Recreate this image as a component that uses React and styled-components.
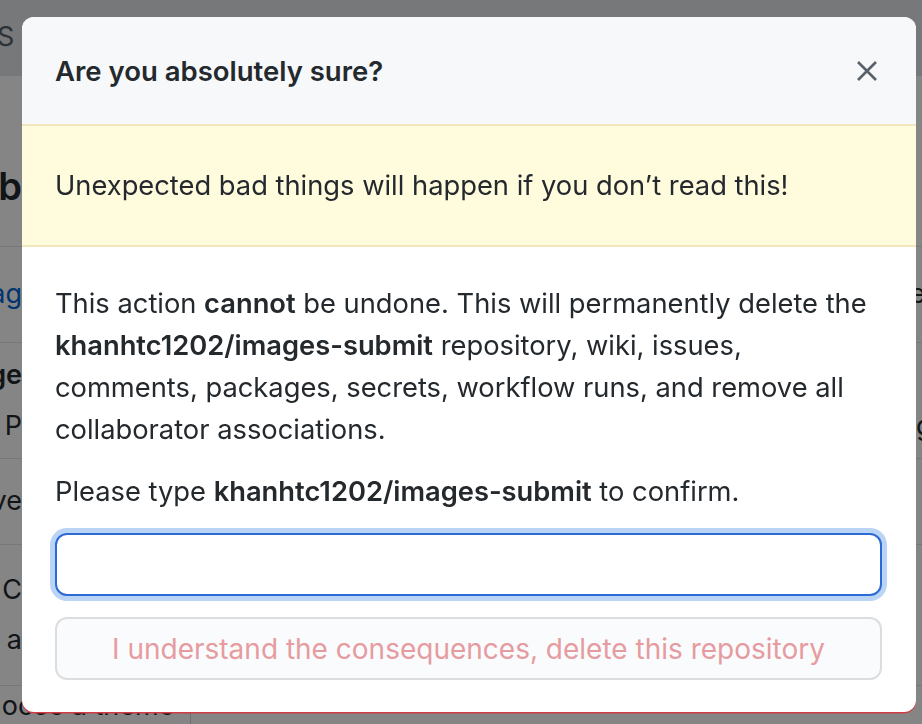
import React from 'react'
import styled, { createGlobalStyle } from 'styled-components'

const GlobalStyle = createGlobalStyle`
    html, body {
        margin: 0;
        padding: 0;
        width: 922px;
        height: 724px;
        overflow: hidden;
        font-family: Inter, "Noto Sans", "Liberation Sans", sans-serif;
        color: #24292e;
        background: #ffffff;
    }
`

const Page = styled.div`
    width: 922px;
    height: 724px;
    display: flex;
    flex-direction: column;
    overflow: hidden;
`

const PageRow = styled.div`
    height: ${({ h }) => h}px;
    flex-shrink: 0;
    display: flex;
    justify-content: space-between;
    border-bottom: 1px solid #e1e4e8;
    background: ${({ dark }) => (dark ? '#e4e6e9' : '#ffffff')};
`

const Edge = styled.div`
    width: 22px;
    overflow: hidden;
    display: flex;
    flex-direction: column;
    justify-content: ${({ bottom }) => (bottom ? 'flex-end' : 'center')};
    padding-bottom: ${({ bottom }) => (bottom ? '36px' : '0')};
    align-items: ${({ right }) => (right ? 'flex-start' : 'flex-end')};
    gap: 18px;
`

const Frag = styled.span`
    white-space: nowrap;
    font-size: ${({ size }) => size || 27}px;
    font-weight: ${({ bold }) => (bold ? 600 : 400)};
    color: ${({ color }) => color || '#24292e'};
    line-height: 1.2;
`

const BottomRow = styled.div`
    flex: 1;
    display: flex;
    align-items: center;
`

const BottomText = styled.div`
    width: 190px;
    height: 100%;
    border-right: 1px solid #d1d5da;
    display: flex;
    align-items: center;
    font-size: 27px;
    white-space: nowrap;
    overflow: hidden;
    text-indent: -34px;
`

const Overlay = styled.div`
    position: fixed;
    inset: 0;
    background: rgba(0, 0, 0, 0.48);
`

const Dialog = styled.div`
    position: fixed;
    top: 17px;
    left: 22px;
    width: 894px;
    height: 695px;
    box-sizing: border-box;
    background: #ffffff;
    border-radius: 12px;
    overflow: hidden;
    display: flex;
    flex-direction: column;
    box-shadow: 0 1.5px 0 #d03b45;
`

const Header = styled.div`
    height: 107px;
    box-sizing: border-box;
    padding: 2px 38px 0 33px;
    background: #f6f8fa;
    display: flex;
    align-items: center;
    justify-content: space-between;
`

const Title = styled.h3`
    margin: 0;
    font-size: 27.5px;
    font-weight: 600;
    color: #24292e;
`

const CloseButton = styled.button`
    border: none;
    background: none;
    padding: 0;
    display: flex;
    color: #586069;
    cursor: pointer;
`

const Flash = styled.div`
    height: 124px;
    box-sizing: border-box;
    padding: 0 33px;
    display: flex;
    align-items: center;
    background: #fffbdd;
    border-top: 2px solid #f1e6bd;
    border-bottom: 2px solid #f1e6bd;
    font-size: 27.3px;
`

const Body = styled.div`
    padding: 36px 34px 32px 33px;
    display: flex;
    flex-direction: column;
`

const Text = styled.p`
    margin: 0 0 20px;
    font-size: 27.3px;
    line-height: 42px;
    color: #24292e;

    strong {
        font-weight: 600;
    }
`

const Input = styled.input`
    height: 63px;
    box-sizing: border-box;
    border: 2px solid #2c6ad6;
    border-radius: 12px;
    outline: none;
    box-shadow: 0 0 0 5px rgba(3, 102, 214, 0.28);
    background: #ffffff;
    font-size: 27px;
    padding: 0 16px;
`

const DangerButton = styled.button`
    margin-top: 21px;
    height: 63px;
    box-sizing: border-box;
    border: 2px solid #dcdde0;
    border-radius: 12px;
    background: #fafbfc;
    font-family: inherit;
    font-size: 28px;
    color: #e69ba1;
    cursor: default;
`

const CloseIcon = () => (
    <svg width="22" height="22" viewBox="0 0 22 22" stroke="currentColor" strokeWidth="2.6" fill="none">
        <path d="M2 2L20 20M20 2L2 20" />
    </svg>
)

const App = () => {
    const repo = 'khanhtc1202/images-submit'
    return (
        <>
            <GlobalStyle />
            <Page>
                <PageRow h={75} dark>
                    <Edge><Frag color="#586069">Git LFS&nbsp;</Frag></Edge>
                    <Edge right />
                </PageRow>
                <PageRow h={170}>
                    <Edge bottom>
                        <Frag size={38} bold>Danger zone b</Frag>
                    </Edge>
                    <Edge right />
                </PageRow>
                <PageRow h={95}>
                    <Edge><Frag color="#0366d6">GitHub Pag</Frag></Edge>
                    <Edge right><Frag>re</Frag></Edge>
                </PageRow>
                <PageRow h={115}>
                    <Edge>
                        <Frag bold>Change</Frag>
                        <Frag>&nbsp;P</Frag>
                    </Edge>
                    <Edge right><Frag>&nbsp;</Frag><Frag>ng</Frag></Edge>
                </PageRow>
                <PageRow h={85}>
                    <Edge><Frag>Archive</Frag></Edge>
                    <Edge right />
                </PageRow>
                <PageRow h={140}>
                    <Edge>
                        <Frag>Delete C</Frag>
                        <Frag>a</Frag>
                    </Edge>
                    <Edge right><Frag>&nbsp;</Frag><Frag>r</Frag></Edge>
                </PageRow>
                <BottomRow>
                    <BottomText>Choose a theme</BottomText>
                </BottomRow>
            </Page>
            <Overlay />
            <Dialog role="dialog">
                <Header>
                    <Title>Are you absolutely sure?</Title>
                    <CloseButton aria-label="Close dialog">
                        <CloseIcon />
                    </CloseButton>
                </Header>
                <Flash>Unexpected bad things will happen if you don’t read this!</Flash>
                <Body>
                    <Text>
                        This action <strong>cannot</strong> be undone. This will permanently delete the{' '}
                        <strong>{repo}</strong> repository, wiki, issues, comments, packages, secrets, workflow runs, and remove all collaborator associations.
                    </Text>
                    <Text>
                        Please type <strong>{repo}</strong> to confirm.
                    </Text>
                    <Input type="text" aria-label="Type in the name of the repository to confirm" />
                    <DangerButton>I understand the consequences, delete this repository</DangerButton>
                </Body>
            </Dialog>
        </>
    )
}

export default App
